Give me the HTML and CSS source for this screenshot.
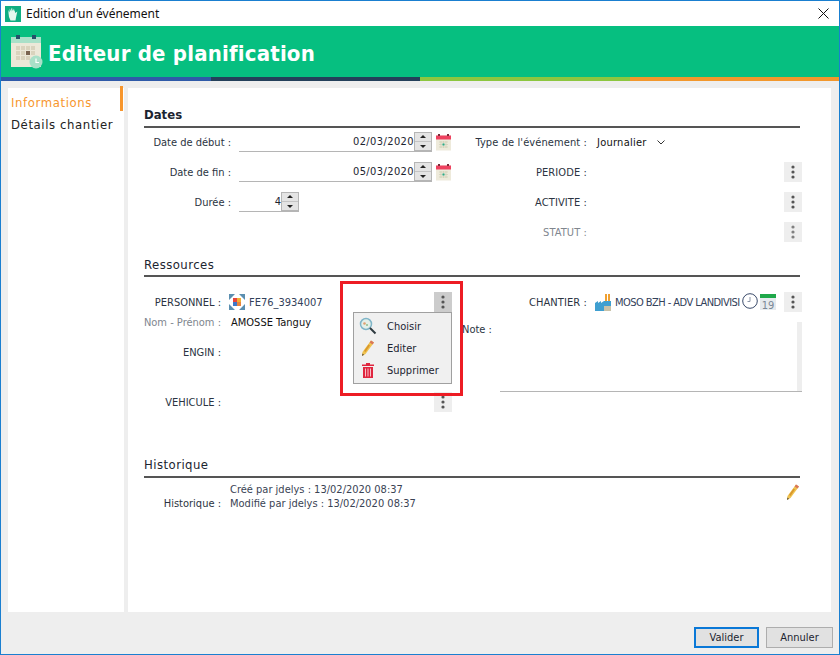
FILE: index.html
```html
<!DOCTYPE html>
<html lang="en">

<head>
    <meta charset="UTF-8">
    <title>Edition d'un événement</title>
    <link rel="stylesheet" href="styles.css">
</head>

<body>
    <svg class="defs" width="0" height="0">
        <symbol id="dots" viewBox="0 0 18 20">
            <circle cx="9" cy="5" r="1.600" /><circle cx="9" cy="10" r="1.600" /><circle cx="9" cy="15" r="1.600" />
        </symbol>
        <symbol id="pencil" viewBox="0 0 16 18">
            <path d="M11 1.500l3 2L5.500 15 2 17l.5-4z" fill="#efc24f" />
            <path d="M11 1.500l3 2-1.400 1.900-3-2z" fill="#d9755a" />
            <path d="M4 12l4.500-6.500 1.500 1L5.500 13z" fill="#d9982c" />
            <path d="M2.300 14.500L2 17l2.200-1.300z" fill="#6b5a3a" />
        </symbol>
        <symbol id="datecal" viewBox="0 0 15 17">
            <rect y="1.500" width="15" height="15" fill="#eeeadb" />
            <rect y="1.500" width="15" height="4" fill="#ee4260" />
            <rect x="2" width="2" height="2" fill="#7a2a3a" /><rect x="11" width="2" height="2" fill="#7a2a3a" />
            <path d="M3 8h9M3 10.500h9M3 13h9M5 7v7M7.500 7v7M10 7v7" stroke="#cfd0b6" stroke-width=".7" />
            <rect x="6.500" y="9.500" width="2" height="2" fill="#27ab8a" />
        </symbol>
    </svg>

    <div class="window">
        <div class="titlebar">
            <svg class="app-icon" width="16" height="16" viewBox="0 0 16 16">
                <rect width="16" height="16" fill="#0fae82" />
                <path d="M3.500 7V4l1.200 2.500V2.500l1.500 3V1.500L7.800 5V2l1.500 3.500V3l1 4 2-1.500-1.300 6L10.500 14.500h-5L4 11z" fill="#e6f7ee" />
            </svg>
            <span class="titlebar-text">Edition d'un événement</span>
            <svg class="close-icon" width="11" height="11" viewBox="0 0 11 11">
                <path d="M.5 .5l10 10M10.500 .5l-10 10" stroke="#111" fill="none" />
            </svg>
        </div>

        <div class="header">
            <svg class="header-icon" width="32" height="34" viewBox="0 0 32 34">
                <rect y="2" width="30" height="30" fill="#ece8d8" />
                <rect y="2" width="30" height="6" fill="#a9e0c8" />
                <rect x="5" width="4" height="4" fill="#24506a" /><rect x="21" width="4" height="4" fill="#24506a" />
                <g fill="#d9d3bd">
                    <rect x="5" y="11" width="4" height="4" /><rect x="10" y="11" width="4" height="4" /><rect x="15" y="11" width="4" height="4" /><rect x="20" y="11" width="4" height="4" />
                    <rect x="5" y="16" width="4" height="4" /><rect x="10" y="16" width="4" height="4" /><rect x="20" y="16" width="4" height="4" />
                    <rect x="5" y="21" width="4" height="4" /><rect x="10" y="21" width="4" height="4" /><rect x="15" y="21" width="4" height="4" />
                </g>
                <rect x="15" y="16" width="4" height="4" fill="#7a6450" />
                <circle cx="25" cy="27" r="6.500" fill="#a9e0c8" />
                <path d="M25 23.500V27.500h3" stroke="#fff" stroke-width="1.200" fill="none" />
            </svg>
            <h1>Editeur de planification</h1>
        </div>
        <div class="stripe"></div>

        <div class="content">
            <nav class="sidebar">
                <div class="tab tab-active">Informations</div>
                <div class="tab">Détails chantier</div>
            </nav>

            <main class="panel">
                <h2 class="section-title title-bold">Dates</h2>
                <div class="dates">
                    <div class="row">
                        <label class="lbl lbl-date">Date de début :</label>
                        <div class="spin-input spin-wide"><span>02/03/2020</span><div class="spinner"><i class="up"></i><i class="down"></i></div></div>
                        <svg class="cal-small"><use href="#datecal" /></svg>
                    </div>
                    <div class="row row-right">
                        <label class="lbl lbl-right">Type de l'événement :</label>
                        <span class="value type-value">Journalier</span>
                        <svg class="chevron" width="8" height="5" viewBox="0 0 8 5"><path d="M.5 .5L4 4 7.500 .5" stroke="#333" fill="none" /></svg>
                    </div>
                    <div class="row">
                        <label class="lbl lbl-date">Date de fin :</label>
                        <div class="spin-input spin-wide"><span>05/03/2020</span><div class="spinner"><i class="up"></i><i class="down"></i></div></div>
                        <svg class="cal-small"><use href="#datecal" /></svg>
                    </div>
                    <div class="row row-right">
                        <label class="lbl lbl-right">PERIODE :</label>
                        <button class="kebab kebab-end"><svg><use href="#dots" /></svg></button>
                    </div>
                    <div class="row">
                        <label class="lbl lbl-date">Durée :</label>
                        <div class="spin-input spin-small"><span>4</span><div class="spinner"><i class="up"></i><i class="down"></i></div></div>
                    </div>
                    <div class="row row-right">
                        <label class="lbl lbl-right">ACTIVITE :</label>
                        <button class="kebab kebab-end"><svg><use href="#dots" /></svg></button>
                    </div>
                    <div class="row"></div>
                    <div class="row row-right muted">
                        <label class="lbl lbl-right">STATUT :</label>
                        <button class="kebab kebab-end"><svg><use href="#dots" /></svg></button>
                    </div>
                </div>

                <h2 class="section-title section-res">Ressources</h2>
                <div class="resources">
                    <div class="res-left">
                        <div class="row">
                            <label class="lbl lbl-res">PERSONNEL :</label>
                            <svg class="res-icon" width="16" height="16" viewBox="0 0 16 16">
                                <path d="M0 0h6L0 6zM16 0v6l-6-6zM0 16v-6l6 6zM16 16h-6l6-6z" fill="#5b8fb0" />
                                <rect x="4" y="4" width="4" height="4" fill="#e8453c" /><rect x="8" y="4" width="4" height="4" fill="#f2b134" />
                                <rect x="4" y="8" width="4" height="4" fill="#3d78c9" /><rect x="8" y="8" width="4" height="4" fill="#e8853c" />
                            </svg>
                            <span class="value-blue">FE76_3934007</span>
                            <button class="kebab kebab-end kebab-open"><svg><use href="#dots" /></svg></button>
                        </div>
                        <div class="row">
                            <label class="lbl lbl-res muted">Nom - Prénom :</label>
                            <span class="value name-value">AMOSSE Tanguy</span>
                        </div>
                        <div class="row row-engin">
                            <label class="lbl lbl-res">ENGIN :</label>
                        </div>
                        <div class="row row-vehicule">
                            <label class="lbl lbl-res">VEHICULE :</label>
                            <button class="kebab kebab-end"><svg><use href="#dots" /></svg></button>
                        </div>
                    </div>
                    <div class="res-right">
                        <div class="row row-right">
                            <label class="lbl lbl-right lbl-chantier">CHANTIER :</label>
                            <svg class="res-icon" width="16" height="17" viewBox="0 0 16 17">
                                <rect x="10" y="0" width="2" height="7" fill="#f0a030" /><rect x="13" y="0" width="2" height="7" fill="#f0a030" />
                                <path d="M0 9l3-2v2l3-2v2l3-2 7 0v10H0z" fill="#3f9fd0" />
                                <rect x="9" y="12" width="7" height="5" fill="#c9c2a8" />
                            </svg>
                            <span class="value-blue chantier-name">MOSO BZH - ADV LANDIVISI</span>
                            <svg class="clock" width="16" height="16" viewBox="0 0 16 16">
                                <circle cx="8" cy="8" r="7.300" fill="#fff" stroke="#3a4a6a" />
                                <path d="M8 4v4.500H5.500" stroke="#8a93a6" fill="none" />
                            </svg>
                            <svg class="cal-day" width="16" height="16" viewBox="0 0 16 16">
                                <rect width="16" height="16" fill="#e6eaee" />
                                <rect width="16" height="4" fill="#1fa84a" />
                                <text x="8" y="14.500" text-anchor="middle" class="cal-day-text">19</text>
                            </svg>
                            <button class="kebab kebab-end"><svg><use href="#dots" /></svg></button>
                        </div>
                        <div class="note">
                            <label class="lbl note-lbl">Note :</label>
                            <div class="note-box"><div class="note-scroll"></div></div>
                        </div>
                    </div>
                    <div class="popup">
                        <div class="menu-item"><svg class="menu-icon" width="18" height="18" viewBox="0 0 18 18">
                                <circle cx="7" cy="7" r="5.500" fill="#e3efe8" stroke="#7fb5c8" stroke-width="1.500" />
                                <circle cx="5.500" cy="6.500" r="1.300" fill="#e0a070" /><circle cx="8" cy="8" r="1" fill="#8cbf8c" />
                                <path d="M11 11l5.500 5.500" stroke="#2f3a40" stroke-width="2" />
                            </svg><span>Choisir</span></div>
                        <div class="menu-item"><svg class="menu-icon" width="18" height="18"><use href="#pencil" /></svg><span>Editer</span></div>
                        <div class="menu-item"><svg class="menu-icon" width="18" height="18" viewBox="0 0 18 18">
                                <path d="M3 3.500h12v1.500H3zM7 2h4v1.500H7z" fill="#e0263f" />
                                <path d="M4 6h10v11H4z" fill="#e0263f" />
                                <path d="M6.500 7.500v8M9 7.500v8M11.500 7.500v8" stroke="#f8c0c8" />
                            </svg><span>Supprimer</span></div>
                    </div>
                    <div class="highlight"></div>
                </div>

                <h2 class="section-title section-hist">Historique</h2>
                <div class="history">
                    <label class="lbl lbl-res hist-lbl">Historique :</label>
                    <div class="hist-lines">
                        <div>Créé par jdelys : 13/02/2020 08:37</div>
                        <div>Modifié par jdelys : 13/02/2020 08:37</div>
                    </div>
                    <svg class="hist-pencil" width="16" height="18"><use href="#pencil" /></svg>
                </div>
            </main>
        </div>

        <div class="footer">
            <button class="btn btn-default">Valider</button>
            <button class="btn">Annuler</button>
        </div>
    </div>
</body>

</html>
```

FILE: styles.css
```css
html,
body {
    margin: 0;
    padding: 0;
}

body {
    width: 840px;
    height: 655px;
    overflow: hidden;
    font-family: "DejaVu Sans Condensed", "DejaVu Sans", sans-serif;
    font-size: 11px;
    color: #2b3442;
}

.defs {
    display: block;
    height: 0;
}

.window {
    box-sizing: border-box;
    width: 840px;
    height: 655px;
    border: 1px solid #1a7fd0;
    background-color: #eeeeee;
    display: flex;
    flex-direction: column;
}

.titlebar {
    height: 25px;
    background-color: #fff;
    display: flex;
    align-items: center;
    padding: 0 10px 0 4px;
    flex: none;
}

.titlebar-text {
    margin-left: 5px;
    font-family: "Noto Sans", sans-serif;
    font-size: 12px;
    color: #111;
}

.close-icon {
    margin-left: auto;
}

.header {
    height: 51px;
    background-color: #06bf80;
    display: flex;
    align-items: center;
    padding-left: 10px;
    flex: none;
}

.header h1 {
    margin: 3px 0 0 5px;
    font-size: 22px;
    letter-spacing: .2px;
    font-weight: bold;
    color: #fff;
}

.stripe {
    height: 4px;
    flex: none;
    background: linear-gradient(to right, #2f5aa8 0 210px, #24405a 210px 419px, #8cc63f 419px 629px, #f2972c 629px);
}

.content {
    display: flex;
    padding: 7px 0 0 7px;
    flex: none;
    box-sizing: border-box;
    height: 531px;
}

.sidebar {
    width: 116px;
    height: 524px;
    background-color: #fff;
    font-size: 13px;
}

.tab {
    height: 22px;
    line-height: 22px;
    padding-left: 3px;
    color: #222;
    letter-spacing: .6px;
}

.tab-active {
    box-sizing: border-box;
    color: #f7962d;
    width: 115px;
    height: 25px;
    margin-top: -2px;
    margin-bottom: 3px;
    line-height: 33px;
    border-right: 3px solid #f7962d;
}

.panel {
    width: 703px;
    height: 524px;
    margin-left: 4px;
    background-color: #fff;
    box-sizing: border-box;
    padding: 16px 31px 0 16px;
}

.section-title {
    margin: 0;
    height: 22px;
    line-height: 24px;
    border-bottom: 2px solid #555;
    font-size: 13px;
    font-weight: normal;
    letter-spacing: .45px;
    color: #1c2430;
}

.title-bold {
    font-weight: bold;
    letter-spacing: 0;
    line-height: 22px;
}

.dates {
    display: grid;
    grid-template-columns: 316px 1fr;
    row-gap: 10px;
    padding-top: 4px;
}

.row {
    height: 20px;
    display: flex;
    align-items: center;
}

.lbl {
    text-align: right;
    flex: none;
    white-space: nowrap;
}

.lbl-date {
    width: 87px;
    margin-right: 8px;
}

.lbl-right {
    width: 127px;
    margin-right: 10px;
    letter-spacing: .1px;
}

.lbl-chantier {
    margin-right: 8px;
}

.lbl-res {
    width: 85px;
    margin-left: -8px;
    margin-right: 8px;
}

.muted {
    color: #80868e;
}

.value {
    color: #111;
}

.type-value {
    letter-spacing: .25px;
}

.value-blue {
    color: #33415a;
}

.spin-input {
    height: 20px;
    box-sizing: border-box;
    border-bottom: 1px solid #b5b5b5;
    display: flex;
    justify-content: flex-end;
    align-items: center;
    color: #1c2430;
}

.spin-wide {
    width: 193px;
    letter-spacing: .4px;
}

.spin-small {
    width: 60px;
}

.spinner {
    width: 18px;
    height: 19px;
    box-sizing: border-box;
    border: 1px solid #b5b5b5;
    background: linear-gradient(#e4e4e4 0 8px, #c4c4c4 8px 9px, #e4e4e4 9px);
    display: flex;
    flex-direction: column;
    justify-content: space-between;
    padding: 2px 0;
    flex: none;
}

.spinner i {
    display: block;
    width: 0;
    height: 0;
    margin: 0 auto;
    border-left: 3px solid transparent;
    border-right: 3px solid transparent;
}

.spinner .up {
    border-bottom: 3px solid #222;
}

.spinner .down {
    border-top: 3px solid #222;
}

.cal-small {
    width: 15px;
    height: 17px;
    margin-left: 4px;
}

.chevron {
    margin-left: 10px;
}

.kebab {
    width: 18px;
    height: 20px;
    border: 0;
    padding: 0;
    background-color: #eeeeee;
    flex: none;
}

.kebab svg {
    display: block;
    width: 18px;
    height: 20px;
    fill: #555;
}

.kebab-end {
    margin-left: auto;
}

.kebab-open {
    background-color: #cccccc;
}

.row-right .kebab-end {
    margin-right: -2px;
}

.muted .kebab svg {
    fill: #808080;
}

.section-res {
    margin-top: 11px;
}

.resources {
    display: grid;
    grid-template-columns: 308px minmax(0, 1fr);
    padding-top: 15px;
    height: 120px;
    position: relative;
}

.row-engin {
    margin-top: 10px;
}

.row-vehicule {
    margin-top: 30px;
}

.res-right {
    padding-left: 8px;
    min-width: 0;
}

.res-icon {
    margin-right: 4px;
    flex: none;
}

.name-value {
    margin-left: 2px;
}

.chantier-name {
    white-space: nowrap;
    letter-spacing: -.55px;
}

.clock {
    margin: -2px 0 0 2px;
    flex: none;
}

.cal-day {
    margin: -1px 0 0 2px;
    flex: none;
}

.cal-day-text {
    font-size: 11px;
    fill: #7a8896;
}

.note {
    display: flex;
    padding-top: 10px;
    margin-left: -8px;
}

.note-lbl {
    width: 29px;
    margin: 0 9px 0 10px;
    padding-top: 1px;
    text-align: left;
}

.note-box {
    width: 302px;
    height: 70px;
    flex: none;
    box-sizing: border-box;
    border-bottom: 1px solid #b5b5b5;
    display: flex;
    justify-content: flex-end;
}

.note-scroll {
    width: 5px;
    background-color: #eeeeee;
}

.popup {
    position: absolute;
    left: 209px;
    top: 35px;
    width: 99px;
    height: 72px;
    box-sizing: border-box;
    border: 1px solid #a0a0a0;
    background-color: #f0f0f0;
    padding-top: 2px;
    color: #1c2430;
}

.menu-item {
    height: 22px;
    display: flex;
    align-items: center;
    padding-left: 5px;
}

.menu-item span {
    margin-left: 10px;
}

.menu-icon {
    flex: none;
}

.highlight {
    position: absolute;
    left: 196px;
    top: 4px;
    width: 123px;
    height: 115px;
    box-sizing: border-box;
    border: 3px solid #ed1c24;
}

.section-hist {
    margin-top: 42px;
    line-height: 22px;
}

.history {
    display: flex;
    align-items: flex-end;
    position: relative;
    padding-top: 5px;
    height: 30px;
}

.hist-lbl {
    height: 14px;
    line-height: 14px;
    margin-bottom: 2px;
}

.hist-lines {
    line-height: 14px;
    margin-left: 1px;
    margin-bottom: 2px;
    color: #3a4354;
}

.hist-pencil {
    position: absolute;
    right: -1px;
    top: 5px;
}

.footer {
    flex: 1;
    display: flex;
    justify-content: flex-end;
    align-items: flex-start;
    gap: 7px;
    padding: 15px 6px 0 0;
}

.btn {
    width: 67px;
    height: 21px;
    border: 1px solid #adadad;
    background-color: #e1e1e1;
    font-family: "DejaVu Sans Condensed", "DejaVu Sans", sans-serif;
    font-size: 11px;
    color: #1c2430;
    padding: 0;
}

.btn-default {
    width: 65px;
    border: 2px solid #0a78d7;
}
```
